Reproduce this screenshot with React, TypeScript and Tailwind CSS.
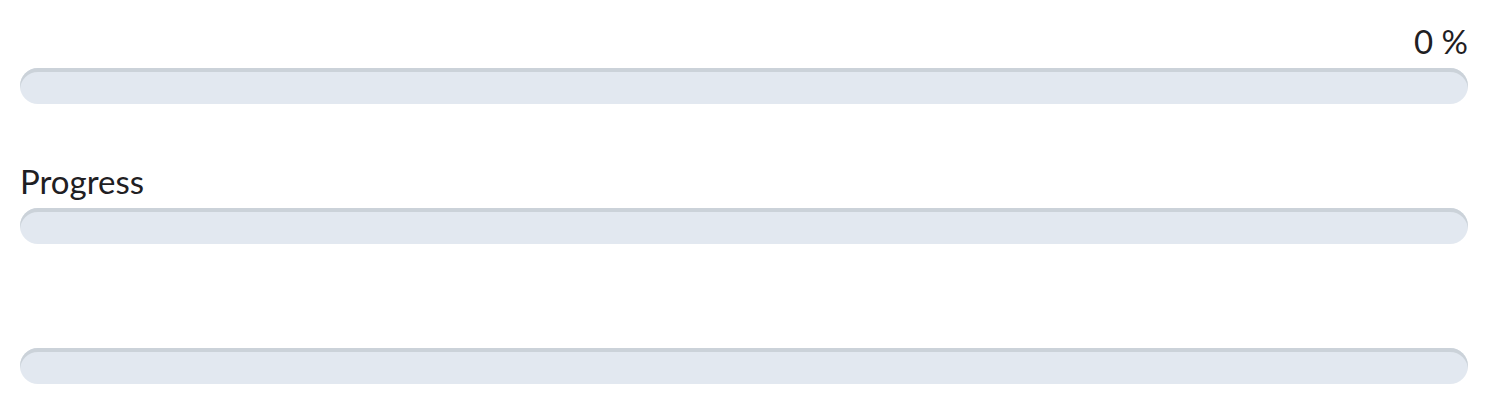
const bars = [
  { label: "0 %", align: "text-right" },
  { label: "Progress", align: "text-left" },
  { label: "", align: "text-left" },
];

export default function App() {
  return (
    <div className="flex flex-col gap-14 bg-white p-5 font-['Lato',sans-serif] text-[#1f2023]">
      {bars.map((bar, i) => (
        <div key={i} className="flex flex-col">
          <div className="flex h-12 flex-col justify-end">
            <div className={`mb-[10px] text-[33px] leading-none ${bar.align}`}>{bar.label}</div>
          </div>
          <div className="h-9 w-full rounded-full bg-[#e2e8f0] shadow-[inset_0_4px_0_#cbd2d9]" />
        </div>
      ))}
    </div>
  );
}
